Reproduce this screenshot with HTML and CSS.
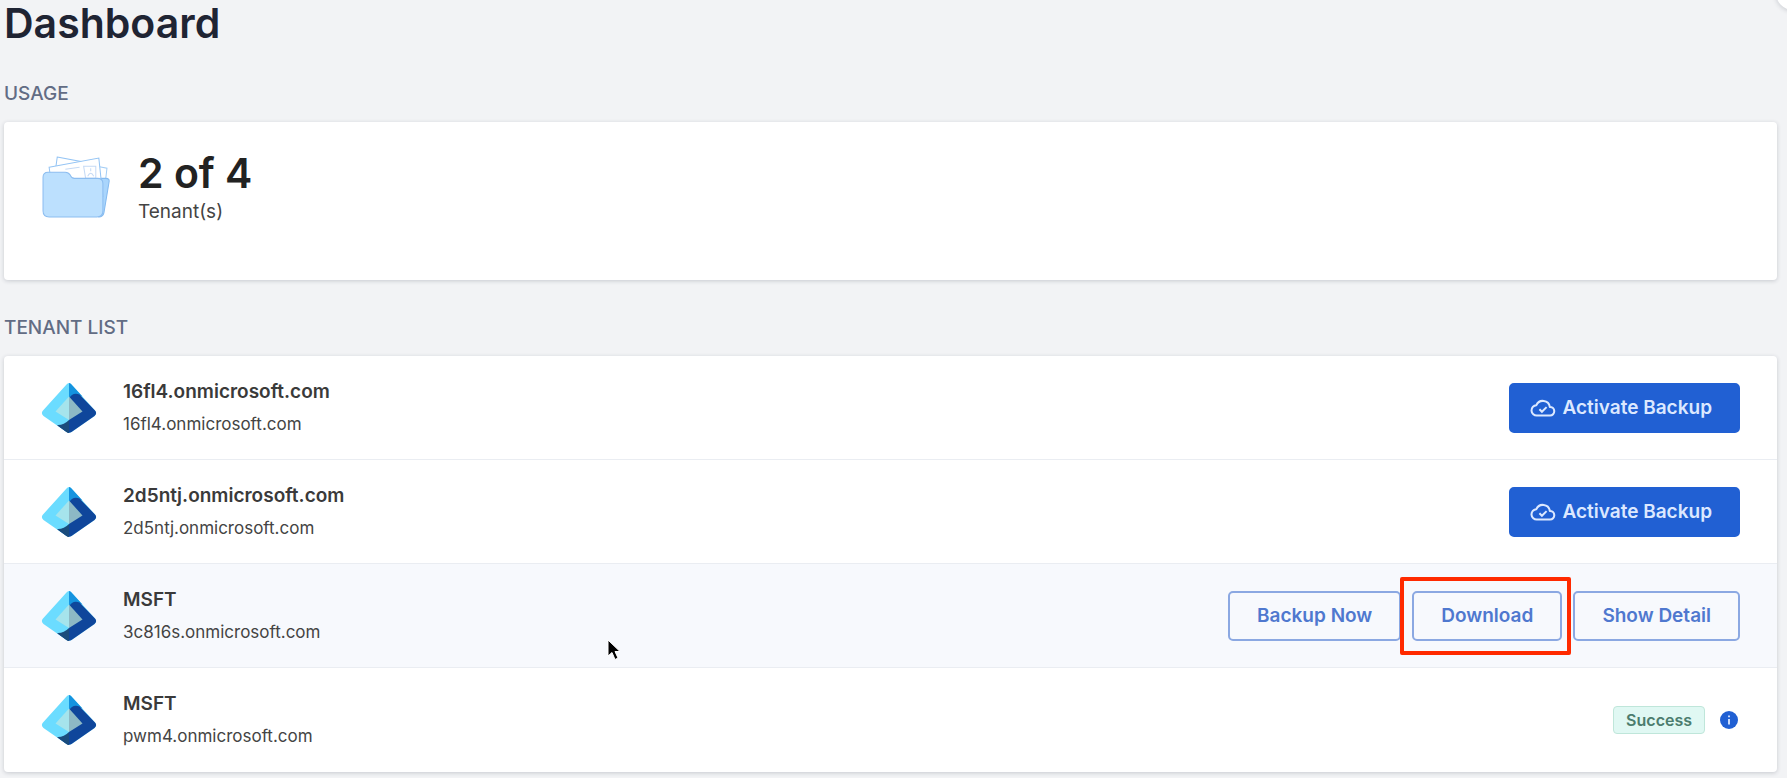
FILE: index.html
```html
<!DOCTYPE html>
<html lang="en">
<head>
    <meta charset="UTF-8">
    <meta name="viewport" content="width=device-width, initial-scale=1.0">
    <title>Dashboard</title>
    <link rel="stylesheet" href="styles.css">
</head>
<body>

    <!-- shared icons -->
    <svg class="sprite" aria-hidden="true">
        <symbol id="tenant" viewBox="0 0 55 50">
            <path d="M27.500 0Q29 0 30 1.500L53.500 27.500Q56 30.500 53 33L30 49Q27.500 50.500 25 49L2 33Q-1 30.500 1.500 27.500L25 1.500Q26 0 27.500 0Z" fill="#6bdcff"/>
            <path d="M27.500 0Q29 0 30 1.500L41 13.500Q33 10 27.500 15.500Z" fill="#1593df"/>
            <path d="M27.500 15.500Q31 9 38 11.500L53.500 27.500Q56 30.500 53 33L30 49Q27.500 50.500 25 49L16 42.500Q22 43 27.500 38Z" fill="#0f469b"/>
            <path d="M15.500 42Q22 42.500 27.500 37V50Q26 50 25 49Z" fill="#1b4c7c"/>
            <path d="M27.500 13.500L14 28.500L27.500 37Z" fill="#a6e4ec"/>
            <path d="M27.500 13.500L41 28.500L27.500 37Z" fill="#8db9c5"/>
        </symbol>
        <symbol id="cloud" viewBox="0 0 24 24">
            <path d="M6.500 19A4.800 4.800 0 0 1 5.900 9.400A6.500 6.500 0 0 1 18.300 11A4 4 0 0 1 18.500 19Z" fill="none" stroke="currentColor" stroke-width="1.900" stroke-linejoin="round"/>
            <path d="M8.700 13.200L11 15.500L15.300 11.200" fill="none" stroke="currentColor" stroke-width="1.800"/>
        </symbol>
    </svg>

    <div class="help"><span></span></div>

    <main class="page">
        <h1>Dashboard</h1>

        <!-- usage -->
        <section>
            <h2>Usage</h2>
            <div class="card usage">
                <svg class="folder" viewBox="0 0 67 61" aria-hidden="true">
                    <path d="M54 10L64 12L60 46L48 44Z" fill="#fff" stroke="#a3cdf5"/>
                    <path d="M15 1L42 6L38 34L11 30Z" fill="#fff" stroke="#94c4f4"/>
                    <path d="M57 22H63Q67 22 66 26L61 56Q60 60 56 60Z" fill="#a9d5fc" stroke="#84baf0"/>
                    <path d="M7 11L56 2L60 40L12 46Z" fill="#fff" stroke="#94c4f4"/>
                    <path d="M23 13L37 11M41 10H53V22H43ZM45 20Q48 14 51 20M48 12V15" fill="none" stroke="#c5daf5"/>
                    <path d="M6 16H23Q26 16 28 19Q29 22 32 22H55Q60 22 60 27V54Q60 60 54 60H7Q1 60 1 54V21Q1 16 6 16Z" fill="#bce0fe" stroke="#8cbdf0"/>
                </svg>
                <div>
                    <div class="count">2 of 4</div>
                    <div class="unit">Tenant(s)</div>
                </div>
            </div>
        </section>

        <!-- tenant list -->
        <section>
            <h2>Tenant list</h2>
            <ul class="card list">
                <li>
                    <svg class="logo" aria-hidden="true"><use href="#tenant"/></svg>
                    <div class="info">
                        <div class="name">16fl4.onmicrosoft.com</div>
                        <div class="domain">16fl4.onmicrosoft.com</div>
                    </div>
                    <button class="btn primary"><svg aria-hidden="true"><use href="#cloud"/></svg>Activate Backup</button>
                </li>
                <li>
                    <svg class="logo" aria-hidden="true"><use href="#tenant"/></svg>
                    <div class="info">
                        <div class="name">2d5ntj.onmicrosoft.com</div>
                        <div class="domain">2d5ntj.onmicrosoft.com</div>
                    </div>
                    <button class="btn primary"><svg aria-hidden="true"><use href="#cloud"/></svg>Activate Backup</button>
                </li>
                <li class="active">
                    <svg class="logo" aria-hidden="true"><use href="#tenant"/></svg>
                    <div class="info">
                        <div class="name">MSFT</div>
                        <div class="domain">3c816s.onmicrosoft.com</div>
                    </div>
                    <button class="btn">Backup Now</button>
                    <div class="marked">
                        <button class="btn">Download</button>
                    </div>
                    <button class="btn">Show Detail</button>
                </li>
                <li>
                    <svg class="logo" aria-hidden="true"><use href="#tenant"/></svg>
                    <div class="info">
                        <div class="name">MSFT</div>
                        <div class="domain">pwm4.onmicrosoft.com</div>
                    </div>
                    <span class="badge">Success</span>
                    <svg class="hint" viewBox="0 0 18 18" aria-hidden="true">
                        <circle cx="9" cy="9" r="9" fill="#2160d3"/>
                        <path d="M9 4.500V6.300M9 8V13.500" stroke="#dce8ff" stroke-width="1.800"/>
                    </svg>
                </li>
            </ul>
        </section>
    </main>

    <svg class="cursor" viewBox="0 0 14 22" aria-hidden="true">
        <path d="M1 1V17L5 13.500L8 20.500L11 19L8 12.500H13Z" fill="#000" stroke="#fff"/>
    </svg>

</body>
</html>
```

FILE: styles.css
```css
* {
    box-sizing: border-box;
}

body {
    margin: 0;
    position: relative;
    overflow-x: hidden;
    background-color: #f2f3f5;
    color: #3a3a3a;
    font-family: Inter, "Liberation Sans", sans-serif;
}

.sprite {
    position: absolute;
    width: 0;
    height: 0;
}

.page {
    padding: 0 10px 6px 4px;
}

h1 {
    margin: 0;
    font-size: 41px;
    line-height: 46px;
    font-weight: 600;
    color: #1f2433;
}

section {
    margin-top: 36px;
}

h2 {
    margin: 0 0 16px;
    font-size: 19px;
    line-height: 24px;
    font-weight: 500;
    color: #626c84;
    text-transform: uppercase;
}

.card {
    background-color: #fff;
    border-radius: 4px;
    box-shadow: 0 1px 4px rgba(30, 40, 60, 0.2);
}

/* usage */
.usage {
    display: flex;
    gap: 28px;
    padding: 27px 38px 53px;
}

.folder {
    width: 68px;
    height: 62px;
    margin-top: 7px;
}

.count {
    font-size: 41px;
    line-height: 48px;
    font-weight: 600;
    color: #222;
}

.unit {
    font-size: 19px;
    line-height: 30px;
    color: #444;
}

/* tenant list */
.list {
    margin: 0;
    padding: 0;
    list-style: none;
}

.list li {
    display: flex;
    align-items: center;
    gap: 11px;
    min-height: 104px;
    padding: 0 37px;
    border-bottom: 1px solid #eaedf2;
}

.list li:last-child {
    border-bottom: 0;
}

.list .active {
    background-color: #f7f9fd;
}

.logo {
    width: 56px;
    height: 50px;
}

.info {
    flex: 1;
    padding-left: 15px;
}

.name {
    font-size: 19px;
    line-height: 32px;
    font-weight: 600;
}

.domain {
    font-size: 17px;
    line-height: 32px;
    color: #444;
}

.btn {
    display: flex;
    align-items: center;
    gap: 6px;
    height: 50px;
    padding: 0 27px;
    border: 2px solid #8ba8e2;
    border-radius: 5px;
    background-color: transparent;
    color: #4f78cf;
    font-family: inherit;
    font-size: 19px;
    font-weight: 600;
    cursor: pointer;
}

.primary {
    padding: 0 26px 0 19px;
    border-color: #2160d3;
    background-color: #2160d3;
    color: #dce8ff;
}

.primary svg {
    width: 26px;
    height: 26px;
}

.marked {
    position: relative;
}

/* red frame drawn over the neighbouring buttons */
.marked::after {
    content: "";
    position: absolute;
    inset: -14px -9px -14px -12px;
    border: 4px solid #ff2a00;
    border-radius: 2px;
    pointer-events: none;
}

.badge {
    padding: 0 12px;
    border: 1px solid #bfe6da;
    border-radius: 4px;
    background-color: #e0f8f3;
    color: #4c7d6e;
    font-size: 16px;
    line-height: 26px;
    font-weight: 600;
}

.hint {
    width: 18px;
    height: 18px;
    margin: 0 2px 0 4px;
}

/* floating round button at the corner */
.help {
    position: absolute;
    top: 0;
    right: 0;
    width: 20px;
    height: 20px;
    overflow: hidden;
}

.help span {
    position: absolute;
    top: -24px;
    left: 9px;
    width: 34px;
    height: 34px;
    border-radius: 50%;
    background-color: #fff;
    box-shadow: 0 1px 5px rgba(30, 40, 60, 0.2);
}

.cursor {
    position: absolute;
    top: 639px;
    left: 607px;
    width: 14px;
    height: 22px;
}
```
